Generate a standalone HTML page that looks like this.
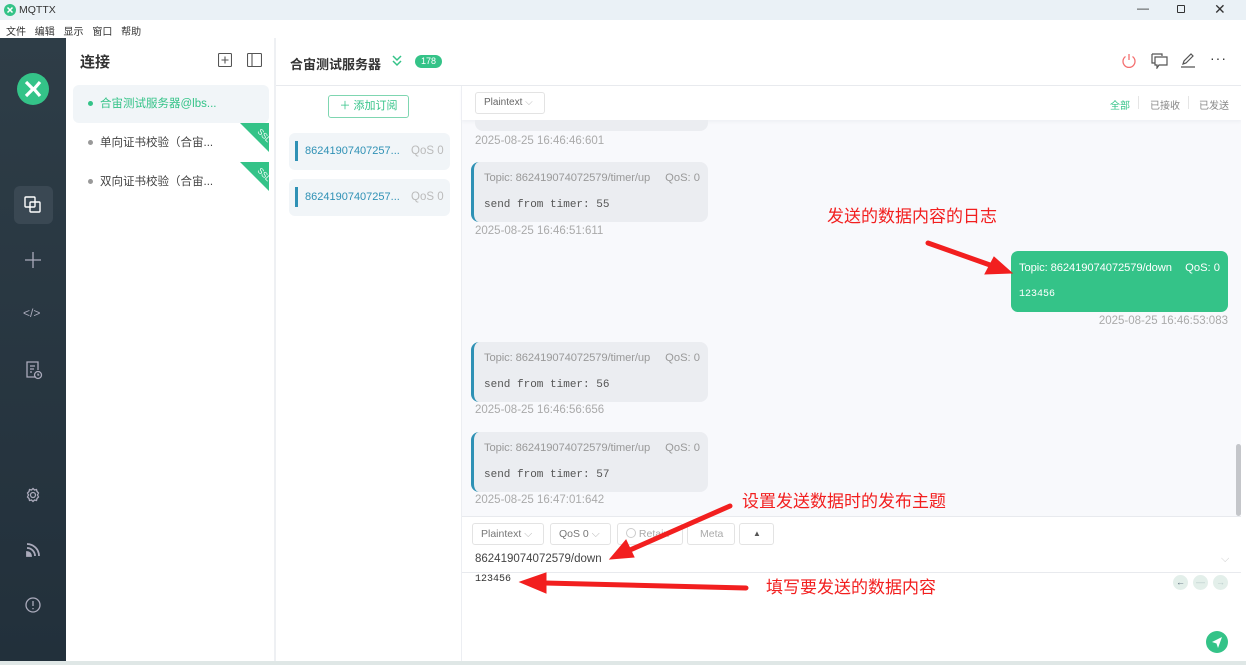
<!DOCTYPE html>
<html><head><meta charset="utf-8"><style>
*{margin:0;padding:0;box-sizing:border-box}
body{width:1246px;height:665px;position:relative;overflow:hidden;background:#fff;font-family:"Liberation Sans","Noto Sans CJK SC",sans-serif;font-size:12px;color:#333}
.a{position:absolute}
.mono{font-family:"Liberation Mono","Noto Sans CJK SC",monospace}
.bub{position:absolute;left:471px;width:237px;height:60px;background:#ebedf1;border-radius:8px;border-left:3px solid #2f91b5;color:#999}
.bub .t{position:absolute;left:10px;top:10px;font-size:11.2px;letter-spacing:-0.1px}
.bub .q{position:absolute;right:8px;top:10px;font-size:11.2px}
.bub .p{position:absolute;left:10px;top:37px;font-size:11px;color:#555}
.ts{position:absolute;left:475px;font-size:11.5px;color:#aaa}
.btn{position:absolute;top:523px;height:22px;border:1px solid #e3e3e3;border-radius:3px;font-size:10.5px;color:#777;line-height:20px;padding-left:8px;background:#fff}
.red{color:#f21f1f;font-size:17px}
</style></head><body>
<div class="a" style="left:0;top:0;width:1246px;height:20px;background:#eaf1f6"></div>
<svg class="a" style="left:4px;top:4px" width="12" height="12"><circle cx="6" cy="6" r="6" fill="#34c388"/><path d="M3.5 3.5l2.5 2.5-2.5 2.5M8.5 3.5L6 6l2.5 2.5" stroke="#fff" stroke-width="1.5" fill="none"/></svg>
<div class="a" style="left:19px;top:4px;font-size:10.5px">MQTTX</div>
<div class="a" style="left:1137px;top:1px;font-size:12px;color:#333">—</div>
<div class="a" style="left:1177px;top:5px;width:8px;height:8px;border:1px solid #333;border-radius:1px"></div>
<div class="a" style="left:1214px;top:1px;font-size:14px;color:#333">✕</div>
<div class="a" style="left:6px;top:23px;font-size:10px;word-spacing:6px">文件 编辑 显示 窗口 帮助</div>
<div class="a" style="left:0;top:38px;width:66px;height:623px;background:linear-gradient(#2e3d47,#22303b)"></div>
<svg class="a" style="left:17px;top:73px" width="32" height="32"><circle cx="16" cy="16" r="16" fill="#34c388"/><path d="M9 9l7 7-7 7M23 9l-6 7 6 7" stroke="#fff" stroke-width="3.2" fill="none"/></svg>
<div class="a" style="left:14px;top:186px;width:39px;height:38px;background:#3a4853;border-radius:6px"></div>
<svg class="a" style="left:24px;top:196px" width="18" height="18" fill="none" stroke="#fff" stroke-width="1.4"><rect x="1" y="1" width="10" height="10" rx="1"/><rect x="6" y="6" width="10" height="10" rx="1"/></svg>
<svg class="a" style="left:24px;top:251px" width="18" height="18" stroke="#aab" stroke-width="1.3"><path d="M9 1v16M1 9h16"/></svg>
<div class="a" style="left:23px;top:306px;color:#aab;font-size:12px">&lt;/&gt;</div>
<svg class="a" style="left:25px;top:360px" width="18" height="20" fill="none" stroke="#aab" stroke-width="1.3"><path d="M11 17H2V2h11v8M5 6h5M5 9h4M5 12h2"/><circle cx="13" cy="15" r="3.5"/><path d="M13 13.5v1.5h1.3"/></svg>
<svg class="a" style="left:25px;top:487px" width="16" height="16" fill="none" stroke="#aab" stroke-width="1.3"><circle cx="8" cy="8" r="2.5"/><path d="M8 1.5l1.5 1.5 2-.5.5 2 1.5 1.5-1 2 1 2-1.5 1.5-.5 2-2-.5L8 14.5 6.5 13l-2 .5-.5-2L2.5 10l1-2-1-2L4 4.5l.5-2 2 .5z"/></svg>
<svg class="a" style="left:26px;top:543px" width="14" height="14" fill="none" stroke="#aab" stroke-width="1.8"><path d="M1 5a8 8 0 0 1 8 8M1 1a12 12 0 0 1 12 12"/><path d="M1 9a4 4 0 0 1 4 4H1z" fill="#aab"/></svg>
<svg class="a" style="left:25px;top:597px" width="16" height="16" fill="none" stroke="#aab" stroke-width="1.3"><circle cx="8" cy="8" r="7"/><path d="M8 4v5M8 11v1.3"/></svg>
<div class="a" style="left:274px;top:38px;width:2px;height:623px;background:#eef0f3"></div>
<div class="a" style="left:80px;top:51px;font-size:15px;font-weight:bold;color:#333">连接</div>
<svg class="a" style="left:218px;top:53px" width="14" height="14" fill="none" stroke="#555" stroke-width="1.1"><rect x=".5" y=".5" width="13" height="13" rx="1"/><path d="M7 3.5v7M3.5 7h7"/></svg>
<svg class="a" style="left:247px;top:53px" width="15" height="14" fill="none" stroke="#555" stroke-width="1.1"><rect x=".5" y=".5" width="14" height="13" rx="1"/><path d="M5 1v12"/></svg>
<div class="a" style="left:73px;top:85px;width:196px;height:38px;background:#f1f5f8;border-radius:6px"></div>
<div class="a" style="left:88px;top:101px;width:5px;height:5px;border-radius:50%;background:#34c388"></div>
<div class="a" style="left:100px;top:95px;color:#34c388;font-size:11.5px">合宙测试服务器@lbs...</div>
<div class="a" style="left:88px;top:140px;width:5px;height:5px;border-radius:50%;background:#999"></div>
<div class="a" style="left:100px;top:134px;font-size:11.5px;color:#444">单向证书校验（合宙...</div>
<div class="a" style="left:88px;top:179px;width:5px;height:5px;border-radius:50%;background:#999"></div>
<div class="a" style="left:100px;top:173px;font-size:11.5px;color:#444">双向证书校验（合宙...</div>
<svg class="a" style="left:240px;top:123px" width="29" height="29"><path d="M0 0h29v29z" fill="#34c388"/><text x="17" y="9" fill="#fff" font-size="8" transform="rotate(45 17 9)" font-family="Liberation Sans">SSL</text></svg>
<svg class="a" style="left:240px;top:162px" width="29" height="29"><path d="M0 0h29v29z" fill="#34c388"/><text x="17" y="9" fill="#fff" font-size="8" transform="rotate(45 17 9)" font-family="Liberation Sans">SSL</text></svg>
<div class="a" style="left:276px;top:85px;width:965px;height:1px;background:#e8eaee"></div>
<div class="a" style="left:290px;top:54px;font-size:13px;font-weight:bold;color:#333">合宙测试服务器</div>
<svg class="a" style="left:391px;top:55px" width="12" height="12" fill="none" stroke="#34c388" stroke-width="1.5"><path d="M2 1l4 4 4-4M2 6l4 4 4-4"/></svg>
<div class="a" style="left:415px;top:55px;width:27px;height:13px;border-radius:7px;background:#34c388;color:#fff;font-size:9px;text-align:center;line-height:13px">178</div>
<svg class="a" style="left:1121px;top:53px" width="16" height="16" fill="none" stroke="#f47070" stroke-width="1.3"><path d="M8 1v6M4.5 3.5a6 6 0 1 0 7 0"/></svg>
<svg class="a" style="left:1151px;top:53px" width="17" height="16" fill="none" stroke="#555" stroke-width="1.2"><path d="M1 1h10v2M4 4h12v8H8l-2 3v-3H4z"/><path d="M1 1v9h3"/></svg>
<svg class="a" style="left:1180px;top:52px" width="16" height="16" fill="none" stroke="#555" stroke-width="1.2"><path d="M3 12l1-3 7-7 2 2-7 7zM1 15h14"/></svg>
<div class="a" style="left:1210px;top:50px;font-size:14px;color:#333;letter-spacing:1px">···</div>
<div class="a" style="left:461px;top:86px;width:1px;height:575px;background:#eceef2"></div>
<div class="a" style="left:328px;top:95px;width:81px;height:23px;border:1px solid #7fd6b1;border-radius:3px;color:#34c388;font-size:11px;line-height:21px;text-align:center">＋ 添加订阅</div>
<div class="a" style="left:289px;top:133px;width:161px;height:37px;background:#f1f5f8;border-radius:6px"></div>
<div class="a" style="left:295px;top:141px;width:3px;height:20px;background:#2f91b5"></div>
<div class="a" style="left:305px;top:145px;color:#2f91b5;font-size:11px">86241907407257...</div>
<div class="a" style="left:411px;top:145px;color:#bbb;font-size:11.5px">QoS 0</div>
<div class="a" style="left:289px;top:179px;width:161px;height:37px;background:#f1f5f8;border-radius:6px"></div>
<div class="a" style="left:295px;top:187px;width:3px;height:20px;background:#2f91b5"></div>
<div class="a" style="left:305px;top:191px;color:#2f91b5;font-size:11px">86241907407257...</div>
<div class="a" style="left:411px;top:191px;color:#bbb;font-size:11.5px">QoS 0</div>
<div class="a" style="left:462px;top:86px;width:779px;height:430px;background:#f8f9fc"></div>
<div class="a" style="left:462px;top:86px;width:779px;height:34px;background:#fff;box-shadow:0 2px 3px #eef0f4"></div>
<div class="a" style="left:475px;top:92px;width:70px;height:22px;border:1px solid #e3e3e3;border-radius:3px;font-size:10px;color:#666;line-height:20px;padding-left:8px">Plaintext <span style="color:#bbb">⌵</span></div>
<div class="a" style="left:1110px;top:97px;font-size:10px;color:#34c388">全部</div>
<div class="a" style="left:1138px;top:96px;width:1px;height:13px;background:#e5e5e5"></div>
<div class="a" style="left:1150px;top:97px;font-size:10px;color:#888">已接收</div>
<div class="a" style="left:1188px;top:96px;width:1px;height:13px;background:#e5e5e5"></div>
<div class="a" style="left:1199px;top:97px;font-size:10px;color:#888">已发送</div>
<div class="a" style="left:475px;top:120px;width:233px;height:11px;background:#ebedf1;border-radius:0 0 8px 8px"></div>
<div class="ts" style="top:135px">2025-08-25 16:46:46:601</div>
<div class="bub" style="top:162px"><div class="t">Topic: 862419074072579/timer/up</div><div class="q">QoS: 0</div><div class="p mono">send from timer: 55</div></div>
<div class="ts" style="top:225px">2025-08-25 16:46:51:611</div>
<div class="a" style="left:1011px;top:251px;width:217px;height:61px;background:#34c388;border-radius:7px;color:#fff">
<div class="a" style="left:8px;top:11px;font-size:11.2px;letter-spacing:-0.1px">Topic: 862419074072579/down</div>
<div class="a" style="right:8px;top:11px;font-size:11.2px">QoS: 0</div>
<div class="a mono" style="left:8px;top:38px;font-size:10px">123456</div></div>
<div class="a" style="right:18px;top:315px;font-size:11.5px;color:#aaa">2025-08-25 16:46:53:083</div>
<div class="bub" style="top:342px"><div class="t">Topic: 862419074072579/timer/up</div><div class="q">QoS: 0</div><div class="p mono">send from timer: 56</div></div>
<div class="ts" style="top:404px">2025-08-25 16:46:56:656</div>
<div class="bub" style="top:432px"><div class="t">Topic: 862419074072579/timer/up</div><div class="q">QoS: 0</div><div class="p mono">send from timer: 57</div></div>
<div class="ts" style="top:494px">2025-08-25 16:47:01:642</div>
<div class="a" style="left:1236px;top:444px;width:5px;height:72px;background:#c4c6ca;border-radius:3px"></div>
<div class="a" style="left:462px;top:516px;width:779px;height:1px;background:#e8eaee"></div>
<div class="btn" style="left:472px;width:72px">Plaintext <span style="color:#bbb">⌵</span></div>
<div class="btn" style="left:550px;width:61px">QoS 0 <span style="color:#bbb">⌵</span></div>
<div class="btn" style="left:617px;width:66px;color:#aaa"><span style="display:inline-block;width:10px;height:10px;border:1px solid #ccc;border-radius:50%;vertical-align:-1px"></span> Retain</div>
<div class="btn" style="left:687px;width:48px;color:#aaa;padding-left:12px">Meta</div>
<div class="btn" style="left:739px;width:35px;font-size:8px;color:#555;padding-left:13px">▲</div>
<div class="a" style="left:475px;top:553px;font-size:11.5px;color:#444">862419074072579/down</div>
<div class="a" style="left:1221px;top:553px;font-size:11px;color:#ccc">⌵</div>
<div class="a" style="left:462px;top:572px;width:779px;height:1px;background:#e8eaee"></div>
<div class="a mono" style="left:475px;top:574px;font-size:10px;color:#333">123456</div>
<div class="a" style="left:1173px;top:575px;width:15px;height:15px;border-radius:50%;background:#e3efea;color:#567;font-size:9px;text-align:center;line-height:15px">←</div>
<div class="a" style="left:1193px;top:575px;width:15px;height:15px;border-radius:50%;background:#e3efea;color:#bcc;font-size:9px;text-align:center;line-height:15px">—</div>
<div class="a" style="left:1213px;top:575px;width:15px;height:15px;border-radius:50%;background:#e3efea;color:#bcc;font-size:9px;text-align:center;line-height:15px">→</div>
<svg class="a" style="left:1206px;top:631px" width="22" height="22"><circle cx="11" cy="11" r="11" fill="#34c388"/><path d="M6 11l10-5-4 11-1.5-4.5z" fill="#fff"/></svg>
<div class="a" style="left:0;top:661px;width:1246px;height:4px;background:#dfe7e6"></div>
<div class="a" style="left:1241px;top:20px;width:5px;height:641px;background:#fff"></div>
<div class="a red" style="left:827px;top:202px">发送的数据内容的日志</div>
<div class="a red" style="left:742px;top:487px">设置发送数据时的发布主题</div>
<div class="a red" style="left:766px;top:573px">填写要发送的数据内容</div>
<svg class="a" style="left:0;top:0" width="1246" height="665" fill="#f21f1f" stroke="#f21f1f" stroke-linecap="round">
<path d="M928 243L990 265" stroke-width="5"/><path d="M1012 273L985 274 994 257z"/>
<path d="M730 506L630 550" stroke-width="5"/><path d="M610 559L626 540 634 557z"/>
<path d="M746 588L545 583" stroke-width="5"/><path d="M520 582L546 573 546 593z"/>
</svg>
</body></html>
